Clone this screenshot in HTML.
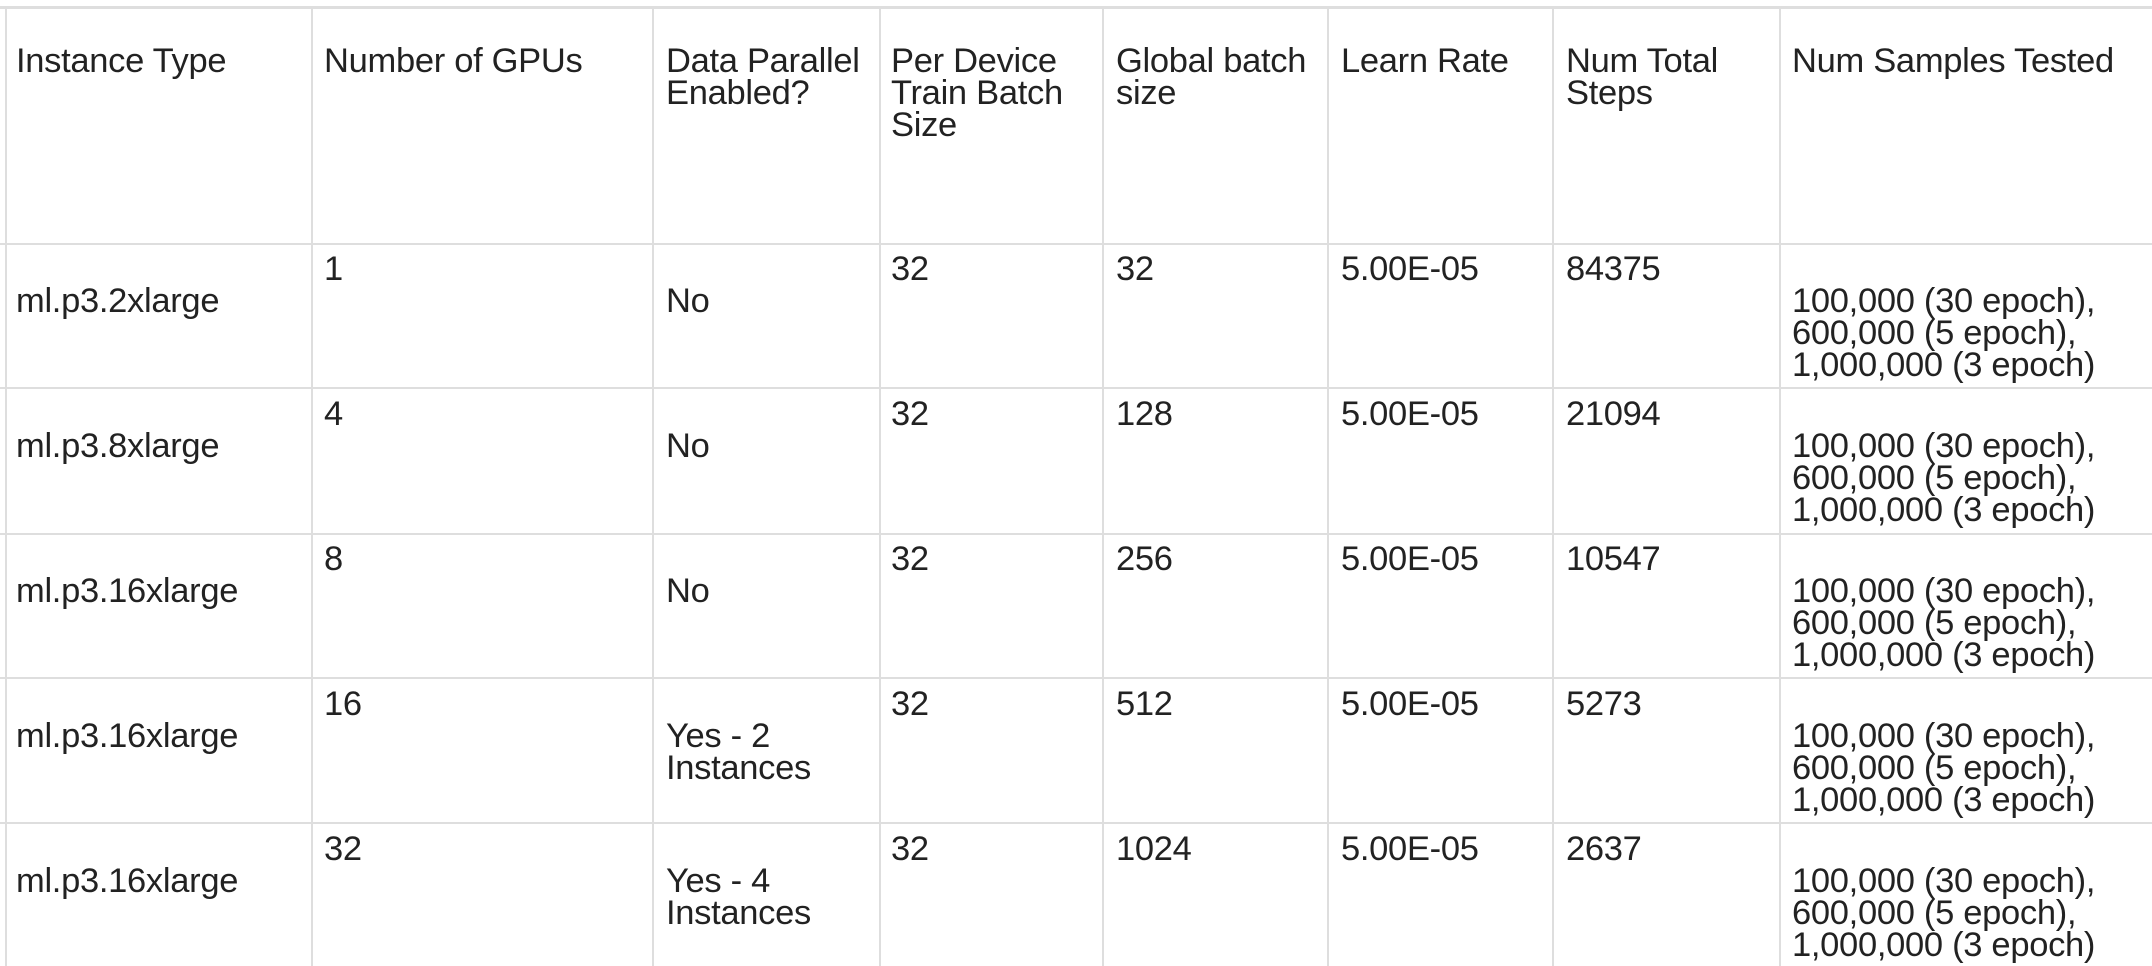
<!DOCTYPE html>
<html><head><meta charset="utf-8"><style>
html,body{margin:0;padding:0;background:#fff;}
body{width:2152px;height:966px;position:relative;overflow:hidden;font-family:"Liberation Sans",sans-serif;color:#222;font-size:34.5px;line-height:32px;letter-spacing:-0.3px;}
.v{position:absolute;top:6px;bottom:0;width:2px;background:#dedede;}
.h{position:absolute;left:0;right:0;height:2px;background:#dedede;}
.t{position:absolute;white-space:nowrap;}
</style></head><body>
<div class="h" style="top:6px;height:3px"></div>
<div class="h" style="top:243px"></div>
<div class="h" style="top:387px"></div>
<div class="h" style="top:533px"></div>
<div class="h" style="top:677px"></div>
<div class="h" style="top:822px"></div>
<div class="v" style="left:5px"></div>
<div class="v" style="left:311px"></div>
<div class="v" style="left:652px"></div>
<div class="v" style="left:879px"></div>
<div class="v" style="left:1102px"></div>
<div class="v" style="left:1327px"></div>
<div class="v" style="left:1552px"></div>
<div class="v" style="left:1779px"></div>

<div class="t" style="left:16px;top:45px">Instance Type</div>
<div class="t" style="left:324px;top:45px">Number of GPUs</div>
<div class="t" style="left:666px;top:45px">Data Parallel<br>Enabled?</div>
<div class="t" style="left:891px;top:45px">Per Device<br>Train Batch<br>Size</div>
<div class="t" style="left:1116px;top:45px">Global batch<br>size</div>
<div class="t" style="left:1341px;top:45px">Learn Rate</div>
<div class="t" style="left:1566px;top:45px">Num Total<br>Steps</div>
<div class="t" style="left:1792px;top:45px">Num Samples Tested</div>

<div class="t" style="left:16px;top:285px">ml.p3.2xlarge</div>
<div class="t" style="left:324px;top:253px">1</div>
<div class="t" style="left:666px;top:285px">No</div>
<div class="t" style="left:891px;top:253px">32</div>
<div class="t" style="left:1116px;top:253px">32</div>
<div class="t" style="left:1341px;top:253px">5.00E-05</div>
<div class="t" style="left:1566px;top:253px">84375</div>
<div class="t" style="left:1792px;top:285px">100,000 (30 epoch),<br>600,000 (5 epoch),<br>1,000,000 (3 epoch)</div>

<div class="t" style="left:16px;top:430px">ml.p3.8xlarge</div>
<div class="t" style="left:324px;top:398px">4</div>
<div class="t" style="left:666px;top:430px">No</div>
<div class="t" style="left:891px;top:398px">32</div>
<div class="t" style="left:1116px;top:398px">128</div>
<div class="t" style="left:1341px;top:398px">5.00E-05</div>
<div class="t" style="left:1566px;top:398px">21094</div>
<div class="t" style="left:1792px;top:430px">100,000 (30 epoch),<br>600,000 (5 epoch),<br>1,000,000 (3 epoch)</div>

<div class="t" style="left:16px;top:575px">ml.p3.16xlarge</div>
<div class="t" style="left:324px;top:543px">8</div>
<div class="t" style="left:666px;top:575px">No</div>
<div class="t" style="left:891px;top:543px">32</div>
<div class="t" style="left:1116px;top:543px">256</div>
<div class="t" style="left:1341px;top:543px">5.00E-05</div>
<div class="t" style="left:1566px;top:543px">10547</div>
<div class="t" style="left:1792px;top:575px">100,000 (30 epoch),<br>600,000 (5 epoch),<br>1,000,000 (3 epoch)</div>

<div class="t" style="left:16px;top:720px">ml.p3.16xlarge</div>
<div class="t" style="left:324px;top:688px">16</div>
<div class="t" style="left:666px;top:720px">Yes - 2<br>Instances</div>
<div class="t" style="left:891px;top:688px">32</div>
<div class="t" style="left:1116px;top:688px">512</div>
<div class="t" style="left:1341px;top:688px">5.00E-05</div>
<div class="t" style="left:1566px;top:688px">5273</div>
<div class="t" style="left:1792px;top:720px">100,000 (30 epoch),<br>600,000 (5 epoch),<br>1,000,000 (3 epoch)</div>

<div class="t" style="left:16px;top:865px">ml.p3.16xlarge</div>
<div class="t" style="left:324px;top:833px">32</div>
<div class="t" style="left:666px;top:865px">Yes - 4<br>Instances</div>
<div class="t" style="left:891px;top:833px">32</div>
<div class="t" style="left:1116px;top:833px">1024</div>
<div class="t" style="left:1341px;top:833px">5.00E-05</div>
<div class="t" style="left:1566px;top:833px">2637</div>
<div class="t" style="left:1792px;top:865px">100,000 (30 epoch),<br>600,000 (5 epoch),<br>1,000,000 (3 epoch)</div>
</body></html>
